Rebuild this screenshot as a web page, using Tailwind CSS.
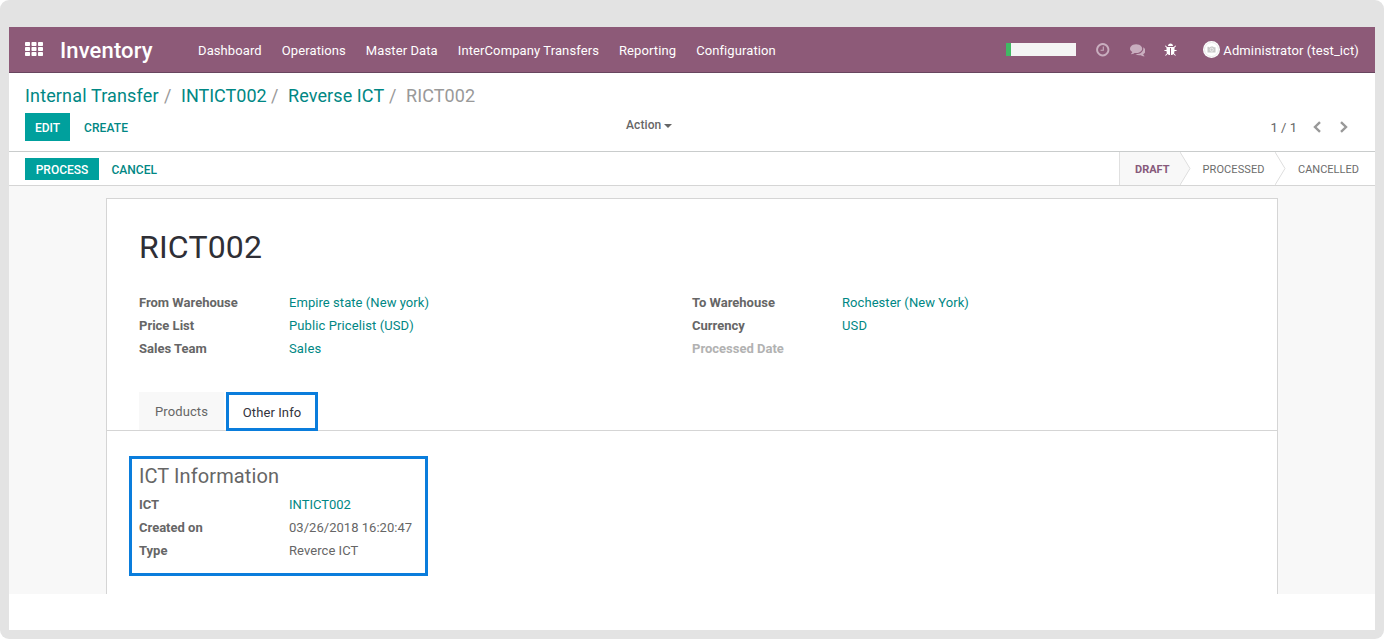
<!DOCTYPE html>
<html lang="en">
<head>
<meta charset="utf-8">
<title>RICT002 - Inventory</title>
<script src="https://cdn.jsdelivr.net/npm/@tailwindcss/browser@4"></script>
</head>
<body class="bg-white">
<div class="flex h-[639px] w-[1384px] flex-col overflow-hidden rounded-[9px] bg-[#e3e3e3] px-[9px] pt-[27px] pb-[9px] font-[Roboto,sans-serif] text-[13px] leading-[20px] whitespace-nowrap text-[#666]">
  <div class="flex flex-1 flex-col bg-white">
    <header class="flex h-[46px] shrink-0 items-center border-b border-[#68465f] bg-[#8d5a78] pl-4 pr-4 text-white">
      <svg class="-mt-0.5 h-[14px] w-[18px]" viewBox="0 0 18 14" fill="currentColor"><rect width="5" height="4" rx=".8"/><rect x="6.5" width="5" height="4" rx=".8"/><rect x="13" width="5" height="4" rx=".8"/><rect y="5" width="5" height="4" rx=".8"/><rect x="6.5" y="5" width="5" height="4" rx=".8"/><rect x="13" y="5" width="5" height="4" rx=".8"/><rect y="10" width="5" height="4" rx=".8"/><rect x="6.5" y="10" width="5" height="4" rx=".8"/><rect x="13" y="10" width="5" height="4" rx=".8"/></svg>
      <h1 class="ml-[17px] w-[138px] pt-0.5 text-[22px] leading-[28px] font-medium tracking-[0.12px]">Inventory</h1>
      <nav class="flex gap-5 pt-[3px] tracking-[0.1px]">
        <a>Dashboard</a><a>Operations</a><a>Master Data</a><a>InterCompany Transfers</a><a>Reporting</a><a>Configuration</a>
      </nav>
      <div class="ml-auto flex items-center">
        <div class="h-[13px] w-[70px] bg-[#f4f4f4]"><div class="h-full w-[5px] bg-[#40b964]"></div></div>
        <svg class="ml-[19px] h-[15.5px] w-[15.5px] text-[#c9aebf]" viewBox="0 0 1792 1792" fill="currentColor"><path d="M1024 544v448q0 14-9 23t-23 9h-320q-14 0-23-9t-9-23v-64q0-14 9-23t23-9h224v-352q0-14 9-23t23-9h64q14 0 23 9t9 23zm416 352q0-148-73-273t-198-198-273-73-273 73-198 198-73 273 73 273 198 198 273 73 273-73 198-198 73-273zm224 0q0 209-103 385.5t-279.5 279.5-385.5 103-385.5-103-279.5-279.5-103-385.5 103-385.5 279.5-279.5 385.5-103 385.5 103 279.5 279.5 103 385.5z"/></svg>
        <svg class="ml-[19px] h-[15.5px] w-[15.5px] text-[#c9aebf]" viewBox="0 0 1792 1792" fill="currentColor"><path d="M1408 768q0 139-94 257t-256.5 186.5-353.5 68.5q-86 0-176-16-124 88-278 128-36 9-86 16h-3q-11 0-20.5-8t-11.5-21q-1-3-1-6.5t.5-6.5 2-6l2.5-5 3.5-5.5 4-5 4.5-5 4-4.5q5-6 23-25t26-29.5 22.5-29 25-38.5 20.5-44q-124-72-195-177t-71-224q0-139 94-257t256.5-186.5 353.5-68.5 353.5 68.5 256.5 186.5 94 257zm384 256q0 120-71 224.5t-195 176.5q10 24 20.5 44t25 38.5 22.5 29 26 29.5 23 25q1 1 4 4.5t4.5 5 4 5 3.5 5.5l2.5 5 2 6 .5 6.5-1 6.5q-3 14-13 22t-22 7q-50-7-86-16-154-40-278-128-90 16-176 16-271 0-472-132 58 4 88 4 161 0 309-45t264-129q125-92 192-212t67-254q0-77-23-152 129 71 204 178t75 230z"/></svg>
        <svg class="ml-[19px] h-[14px] w-[14px]" viewBox="0 0 1792 1792" fill="currentColor"><path d="M1632 960q0 26-19 45t-45 19h-224q0 171-67 290l208 209q19 19 19 45t-19 45q-18 19-45 19t-45-19l-198-197q-5 5-15 13t-42 28.5-65 36.5-82 29-97 13v-896h-128v896q-51 0-101.5-13.5t-87-33-66-39-43.5-32.5l-15-14-183 207q-20 21-48 21-24 0-43-16-19-18-20.5-44.5t15.5-46.5l202-227q-58-114-58-274h-224q-26 0-45-19t-19-45 19-45 45-19h224v-294l-173-173q-19-19-19-45t19-45 45-19 45 19l173 173h844l173-173q19-19 45-19t45 19 19 45-19 45l-173 173v294h224q26 0 45 19t19 45zm-480-576h-640q0-133 93.5-226.5t226.5-93.5 226.5 93.5 93.5 226.5z"/></svg>
        <svg class="ml-[25px] h-[17px] w-[17px]" viewBox="0 0 17 17"><circle cx="8.5" cy="8.5" r="8.5" fill="#fff"/><circle cx="8.5" cy="8.5" r="7" fill="none" stroke="#e2e2e2" stroke-width=".8"/><path d="M4.5 5.8h1l1 .7 1.5-1h2l.8.7h1.7v5.3h-8z" fill="#c8c8c8"/><circle cx="8.7" cy="8.7" r="1.6" fill="#c8c8c8" stroke="#f4f4f4" stroke-width=".8"/></svg>
        <span class="ml-[3px] pt-[3px] tracking-[0.1px]">Administrator (test_ict)</span>
      </div>
    </header>

    <section class="flex h-[79px] shrink-0 flex-col border-b border-[#c9cccc] px-4 pt-[11px]">
      <div class="flex h-6 items-center text-[18px] leading-6 text-[#999]">
        <a class="w-[139px] tracking-[0.15px] text-[#008784]">Internal Transfer</a><span class="w-[17px]">/</span>
        <a class="w-[90px] text-[#008784]">INTICT002</a><span class="w-[17px]">/</span>
        <a class="w-[101px] tracking-[0.1px] text-[#008784]">Reverse ICT</a><span class="w-[17px]">/</span>
        <span class="tracking-[0.1px]">RICT002</span>
      </div>
      <div class="mt-[5px] flex h-7 items-center text-[12px] font-medium">
        <button class="h-7 w-[45px] bg-[#00a09d] pt-px text-white">EDIT</button>
        <button class="ml-[14px] w-[45px] pt-px text-left tracking-[0.1px] text-[#008784]">CREATE</button>
        <div class="ml-[497px] -mt-[5px] flex items-center gap-[3px]"><span class="tracking-[0.1px]">Action</span><span class="mt-[3px] border-x-4 border-t-4 border-x-transparent border-t-[#666]"></span></div>
        <div class="mr-[11px] ml-auto flex items-center text-[13px] font-normal"><span class="pt-px">1 / 1</span>
          <svg class="-mt-px ml-[16px] h-3 w-2" viewBox="0 0 8 12" fill="none" stroke="#999" stroke-width="2.4"><path d="M7 1.2 2 6l5 4.8"/></svg>
          <svg class="-mt-px ml-[19px] h-3 w-2" viewBox="0 0 8 12" fill="none" stroke="#999" stroke-width="2.4"><path d="M1 1.2 6 6l-5 4.8"/></svg>
        </div>
      </div>
    </section>

    <section class="flex h-[34px] shrink-0 items-center border-b border-[#d5d5d5] pl-4 text-[12px] font-medium">
      <button class="h-[22px] w-[74px] bg-[#00a09d] pt-0.5 text-white">PROCESS</button>
      <button class="ml-[12.5px] pt-0.5 text-[#008784]">CANCEL</button>
      <div class="ml-auto flex h-[33px] items-center text-[11px] text-[#777]">
        <div class="flex h-full w-[61px] items-center border-l border-[#e0e0e0] bg-[#f8f8f8] pt-0.5 pl-[15px] font-bold text-[#875a7b]">DRAFT</div>
        <svg class="h-[33px] w-[11px]" viewBox="0 0 11 33"><path d="M0 0 10 16.5 0 33z" fill="#f8f8f8"/><path d="M0 0 10 16.5 0 33" fill="none" stroke="#dedede"/></svg>
        <div class="w-[84px] pt-0.5 pl-[11.5px] font-normal tracking-[0.1px] text-[#6c6c6c]">PROCESSED</div>
        <svg class="h-[33px] w-[11px]" viewBox="0 0 11 33"><path d="M0 0 10 16.5 0 33" fill="none" stroke="#dedede"/></svg>
        <div class="w-[89px] pt-0.5 pl-[12px] font-normal text-[#6c6c6c]">CANCELLED</div>
      </div>
    </section>

    <main class="flex h-[408px] shrink-0 justify-center bg-[#f8f8f8] pt-3">
      <div class="w-[1172px] border border-b-0 border-[#d5d5d5] bg-white">
        <h2 class="mt-[28px] ml-8 text-[32px] leading-[40px] tracking-[0.2px] text-[#2f2f36]">RICT002</h2>
        <div class="mt-[24px] ml-8 grid grid-cols-[150px_403px_150px_1fr] leading-[23px]">
          <b>From Warehouse</b><a class="tracking-[0.06px] text-[#008784]">Empire state (New york)</a><b>To Warehouse</b><a class="tracking-[0.06px] text-[#008784]">Rochester (New York)</a>
          <b>Price List</b><a class="tracking-[0.1px] text-[#008784]">Public Pricelist (USD)</a><b>Currency</b><a class="tracking-[0.15px] text-[#008784]">USD</a>
          <b>Sales Team</b><a class="tracking-[0.15px] text-[#008784]">Sales</a><b class="text-[#b2b2b2]">Processed Date</b>
        </div>
        <div class="mt-[32px] flex h-[39px] border-b border-[#d5d5d5] pl-8">
          <div class="h-[38px] w-[85px] bg-[#f8f8f8] pt-[10px] text-center tracking-[0.1px]">Products</div>
          <div class="ml-0.5 h-[39px] w-[92px] border-3 border-[#0a7ddc] bg-white pt-[8px] text-center tracking-[0.1px] text-[#33333d]">Other Info</div>
        </div>
        <div class="mt-[25px] ml-[22px] h-[120px] w-[299px] border-3 border-[#0a7ddc] pl-[7px]">
          <h3 class="pt-1 text-[20px] leading-[26px] tracking-[0.1px]">ICT Information</h3>
          <div class="mt-[4px] grid grid-cols-[150px_1fr] leading-[23px]">
            <b>ICT</b><a class="text-[#008784]">INTICT002</a>
            <b>Created on</b><span class="tracking-[0.03px]">03/26/2018 16:20:47</span>
            <b>Type</b><span class="tracking-[0.06px]">Reverce ICT</span>
          </div>
        </div>
      </div>
    </main>
  </div>
</div>
</body>
</html>
